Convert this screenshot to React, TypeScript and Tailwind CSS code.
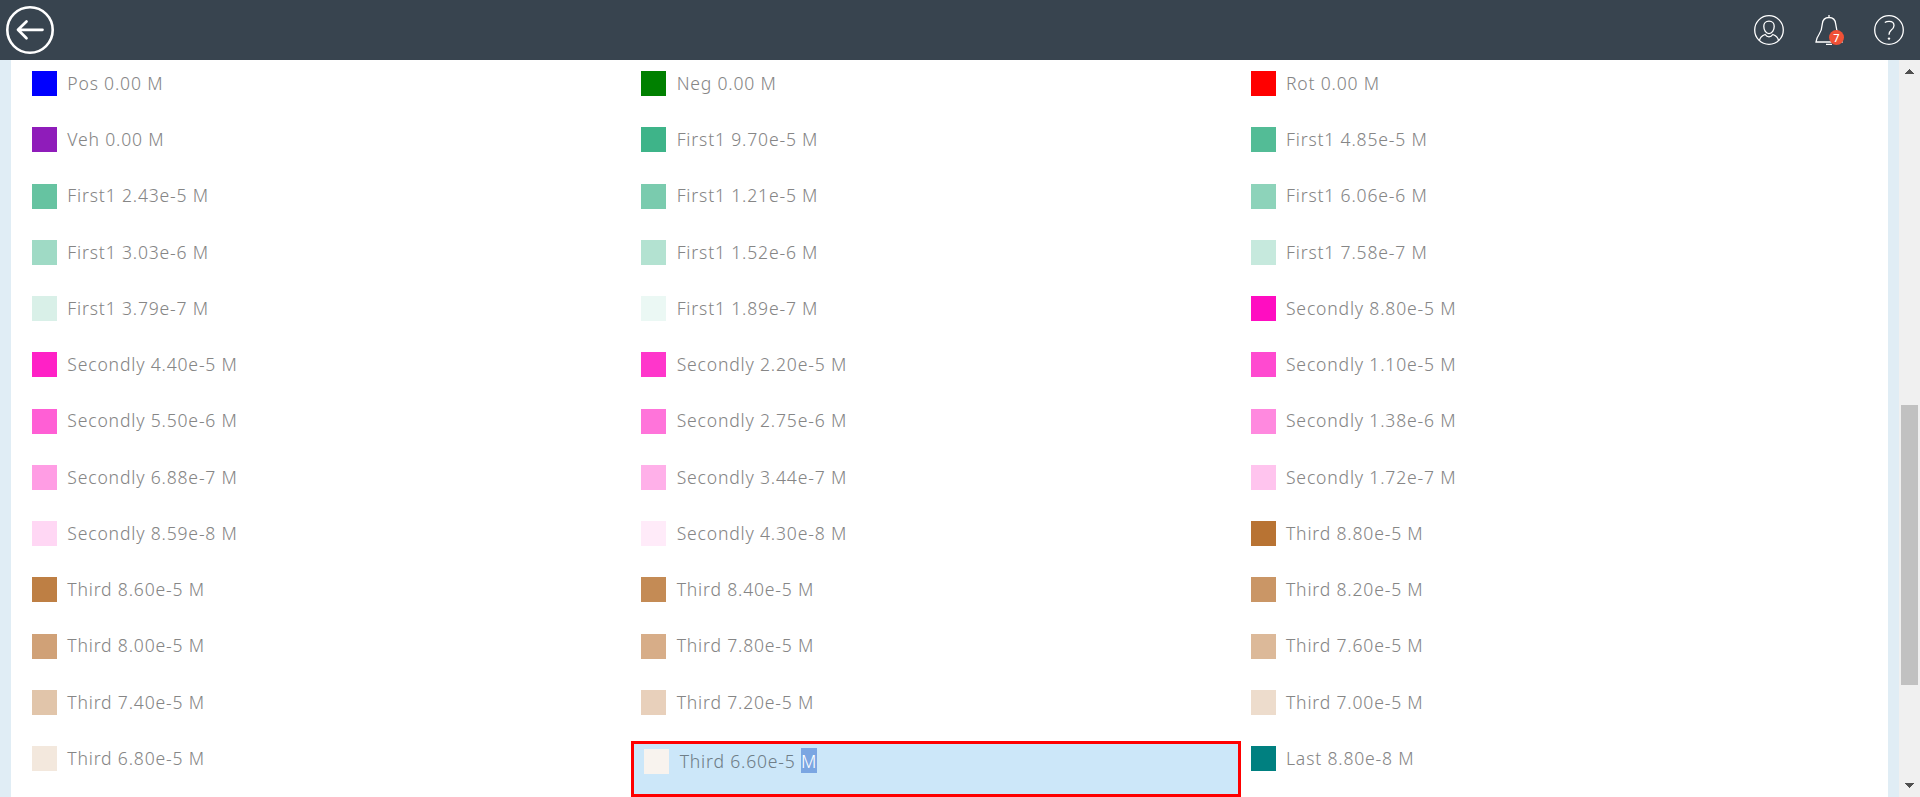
type Item = { color: string; label: string };

const items: Item[] = [
  { color: "#0000ff", label: "Pos 0.00 M" },
  { color: "#008000", label: "Neg 0.00 M" },
  { color: "#ff0000", label: "Rot 0.00 M" },
  { color: "#8f1cba", label: "Veh 0.00 M" },
  { color: "#3eb489", label: "First1 9.70e-5 M" },
  { color: "#53bc96", label: "First1 4.85e-5 M" },
  { color: "#66c3a1", label: "First1 2.43e-5 M" },
  { color: "#7acbae", label: "First1 1.21e-5 M" },
  { color: "#8dd3ba", label: "First1 6.06e-6 M" },
  { color: "#9fdac5", label: "First1 3.03e-6 M" },
  { color: "#b3e2d1", label: "First1 1.52e-6 M" },
  { color: "#c6e9dd", label: "First1 7.58e-7 M" },
  { color: "#d9f0e8", label: "First1 3.79e-7 M" },
  { color: "#ebf8f4", label: "First1 1.89e-7 M" },
  { color: "#ff0dc1", label: "Secondly 8.80e-5 M" },
  { color: "#ff21c6", label: "Secondly 4.40e-5 M" },
  { color: "#ff36cb", label: "Secondly 2.20e-5 M" },
  { color: "#ff4ad0", label: "Secondly 1.10e-5 M" },
  { color: "#ff5fd5", label: "Secondly 5.50e-6 M" },
  { color: "#ff74da", label: "Secondly 2.75e-6 M" },
  { color: "#ff89df", label: "Secondly 1.38e-6 M" },
  { color: "#ff9de4", label: "Secondly 6.88e-7 M" },
  { color: "#ffb0e9", label: "Secondly 3.44e-7 M" },
  { color: "#ffc4ee", label: "Secondly 1.72e-7 M" },
  { color: "#ffd7f4", label: "Secondly 8.59e-8 M" },
  { color: "#ffebf9", label: "Secondly 4.30e-8 M" },
  { color: "#b87333", label: "Third 8.80e-5 M" },
  { color: "#be7f44", label: "Third 8.60e-5 M" },
  { color: "#c48b55", label: "Third 8.40e-5 M" },
  { color: "#ca9666", label: "Third 8.20e-5 M" },
  { color: "#d0a177", label: "Third 8.00e-5 M" },
  { color: "#d7ad88", label: "Third 7.80e-5 M" },
  { color: "#dcb999", label: "Third 7.60e-5 M" },
  { color: "#e1c5aa", label: "Third 7.40e-5 M" },
  { color: "#e8d0bb", label: "Third 7.20e-5 M" },
  { color: "#eddccc", label: "Third 7.00e-5 M" },
  { color: "#f3e8dd", label: "Third 6.80e-5 M" },
  { color: "#f8f3ee", label: "Third 6.60e-5 M" },
  { color: "#008080", label: "Last 8.80e-8 M" },
];

const SELECTED = "Third 6.60e-5 M";

function LegendItem({ item }: { item: Item }) {
  const selected = item.label === SELECTED;
  return (
    <div
      className={
        selected
          ? "flex h-[56.25px] items-start border-3 border-[#ff0000] bg-[#cce7f9] pt-[5px] pl-[10px]"
          : "flex h-[56.25px] items-start pt-[5px] pl-[10px]"
      }
    >
      <div className="size-[25px] shrink-0" style={{ backgroundColor: item.color }} />
      <span
        className={
          selected
            ? "-mt-[1.25px] ml-[10.3px] whitespace-pre text-[#6f7e88]"
            : "-mt-[1.25px] ml-[10.3px] whitespace-pre text-[#868686]"
        }
      >
        {selected ? (
          <>
            {item.label.slice(0, -1)}
            <span className="bg-[#7ba6e2] text-white">M</span>
          </>
        ) : (
          item.label
        )}
      </span>
    </div>
  );
}

function Header() {
  return (
    <header className="flex h-[60px] shrink-0 items-center justify-between bg-[#38444f] pr-4 pl-[6px]">
      <svg width="48" height="48" viewBox="0 0 48 48" fill="none" stroke="#fff" strokeLinecap="round" strokeLinejoin="round">
        <circle cx="24" cy="24" r="22.7" strokeWidth="2.6" />
        <path d="M36.5 23.800H12.500M20.500 15.500L12 23.800l8.500 8.500" strokeWidth="2.7" />
      </svg>
      <div className="flex items-center gap-[30px]">
        <svg width="30" height="30" viewBox="0 0 30 30" fill="none" stroke="#fff" strokeWidth="1.3">
          <circle cx="15" cy="15" r="14.300" />
          <path d="M15 6.200c-3.400 0-5.200 2.100-5.200 5 0 4 2.200 7.400 5.200 7.400s5.200-3.400 5.200-7.400C20.200 8.300 18.400 6.200 15 6.200z" />
          <path d="M5.400 25.600c.6-3.300 1.900-4.800 5.800-6.100 1 1.500 2.300 2.300 3.800 2.300s2.800-.8 3.800-2.300c3.900 1.300 5.200 2.800 5.800 6.100" />
        </svg>
        <div className="relative size-[30px]">
          <svg width="30" height="30" viewBox="0 0 30 30" fill="none" stroke="#fff" strokeWidth="1.3">
            <path d="M15 0v2.500M15 2.500c-4 0-6.300 2.300-6.700 6.500-.4 6-1.300 7.500-3.300 10.500-1.600 2.300-2.800 4.200-3 7.500h26c-.2-3.300-1.400-5.200-3-7.500-2-3-2.900-4.500-3.300-10.500C21.300 4.800 19 2.500 15 2.500z" />
            <path d="M12 29.400h6" />
          </svg>
          <div className="absolute top-[15px] left-[15px] flex size-[15px] items-center justify-center rounded-full bg-[#f05136] font-['Noto_Sans',sans-serif] text-[11px] leading-none font-medium tracking-normal text-white">
            <span className="-mt-px">7</span>
          </div>
        </div>
        <svg width="30" height="30" viewBox="0 0 30 30" fill="none" stroke="#fff" strokeWidth="1.3">
          <circle cx="15" cy="15" r="14.300" />
          <path d="M10.800 7.500c1.300-.9 2.700-1.200 4.300-1.200 3 0 4.900 1.500 4.900 4.100 0 2-1 3.200-2.700 4.600-1.700 1.400-2.300 2.300-2.300 4.700" />
          <circle cx="15" cy="23.600" r="1.200" fill="#fff" stroke="none" />
        </svg>
      </div>
    </header>
  );
}

function Scrollbar() {
  return (
    <div className="flex w-[21px] shrink-0 flex-col items-center bg-[#f0f0f0] pt-[9px] pb-[9px]">
      <svg width="9" height="5" viewBox="0 0 9 5" fill="#505050" shapeRendering="crispEdges">
        <path d="M4.500 0L9 4.500V5H0V4.500z" />
      </svg>
      <div className="mt-[331px] h-[280px] w-[17px] bg-[#c1c1c1]" />
      <svg className="mt-auto" width="9" height="5" viewBox="0 0 9 5" fill="#505050" shapeRendering="crispEdges">
        <path d="M0 0H9V.5L4.500 5L0 .5z" />
      </svg>
    </div>
  );
}

export default function App() {
  return (
    <div className="flex h-[797px] w-[1920px] flex-col overflow-hidden bg-white font-['Noto_Sans_Display','Noto_Sans',sans-serif] text-[18.67px] leading-[normal] font-light tracking-[0.82px]">
      <Header />
      <div className="flex min-h-0 flex-1">
        <main className="flex-1 overflow-hidden border-x-[11px] border-[#e0edf5] pt-[6px] pl-[11px]">
          <div className="grid w-[1828px] grid-cols-3">
            {items.map((item) => (
              <LegendItem key={item.label} item={item} />
            ))}
          </div>
        </main>
        <Scrollbar />
      </div>
    </div>
  );
}
